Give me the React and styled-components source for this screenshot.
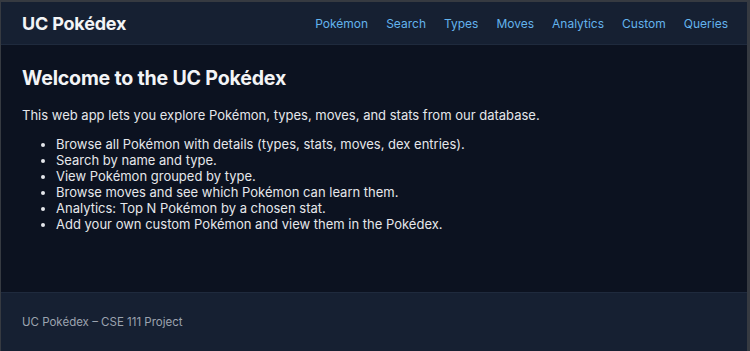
import React from 'react';
import styled, { createGlobalStyle } from 'styled-components';

const GlobalStyle = createGlobalStyle`
  html, body {
    margin: 0;
    padding: 0;
    background: #0b1120;
  }
  body {
    font-family: Inter, 'Noto Sans', sans-serif;
    color: #e5e7eb;
  }
  * {
    box-sizing: border-box;
  }
`;

const Page = styled.div`
  display: flex;
  flex-direction: column;
  height: 351px;
  border-top: 2px solid #363a41;
  border-left: 1px solid #363a41;
  border-right: 3px solid #363a41;
  background: #0c1220;
`;

const Header = styled.header`
  display: flex;
  align-items: center;
  justify-content: space-between;
  height: 43px;
  padding: 0 19px 0 21px;
  background: #162032;
  border-bottom: 1px solid #1f2a3d;
`;

const Brand = styled.div`
  font-size: 18px;
  font-weight: 700;
  color: #f3f4f6;
  letter-spacing: -0.2px;
`;

const Nav = styled.nav`
  display: flex;
  gap: 18px;
`;

const NavLink = styled.a`
  font-size: 12px;
  color: #63b3ed;
  text-decoration: none;
  cursor: pointer;
`;

const Main = styled.main`
  flex: 1;
  padding: 21px 21px;
  border-bottom: 1px solid #1f2a3d;
`;

const Title = styled.h1`
  margin: 0 0 17px;
  font-size: 19.6px;
  font-weight: 700;
  color: #f3f4f6;
  letter-spacing: -0.2px;
`;

const Intro = styled.p`
  margin: 0 0 13px;
  font-size: 13px;
  line-height: 16px;
`;

const List = styled.ul`
  margin: 0;
  padding-left: 34px;
`;

const Item = styled.li`
  font-size: 13px;
  line-height: 16px;
`;

const Footer = styled.footer`
  display: flex;
  align-items: center;
  height: 58px;
  padding: 0 21px;
  background: #162032;
  font-size: 11.5px;
  color: #9ca3af;
`;

const links = ['Pokémon', 'Search', 'Types', 'Moves', 'Analytics', 'Custom', 'Queries'];

const features = [
  'Browse all Pokémon with details (types, stats, moves, dex entries).',
  'Search by name and type.',
  'View Pokémon grouped by type.',
  'Browse moves and see which Pokémon can learn them.',
  'Analytics: Top N Pokémon by a chosen stat.',
  'Add your own custom Pokémon and view them in the Pokédex.'
];

export default function App() {
  return (
    <>
      <GlobalStyle />
      <Page>
        <Header>
          <Brand>UC Pokédex</Brand>
          <Nav>
            {links.map(l => (
              <NavLink key={l}>{l}</NavLink>
            ))}
          </Nav>
        </Header>
        <Main>
          <Title>Welcome to the UC Pokédex</Title>
          <Intro>
            This web app lets you explore Pokémon, types, moves, and stats from our database.
          </Intro>
          <List>
            {features.map(f => (
              <Item key={f}>{f}</Item>
            ))}
          </List>
        </Main>
        <Footer>UC Pokédex – CSE 111 Project</Footer>
      </Page>
    </>
  );
}
